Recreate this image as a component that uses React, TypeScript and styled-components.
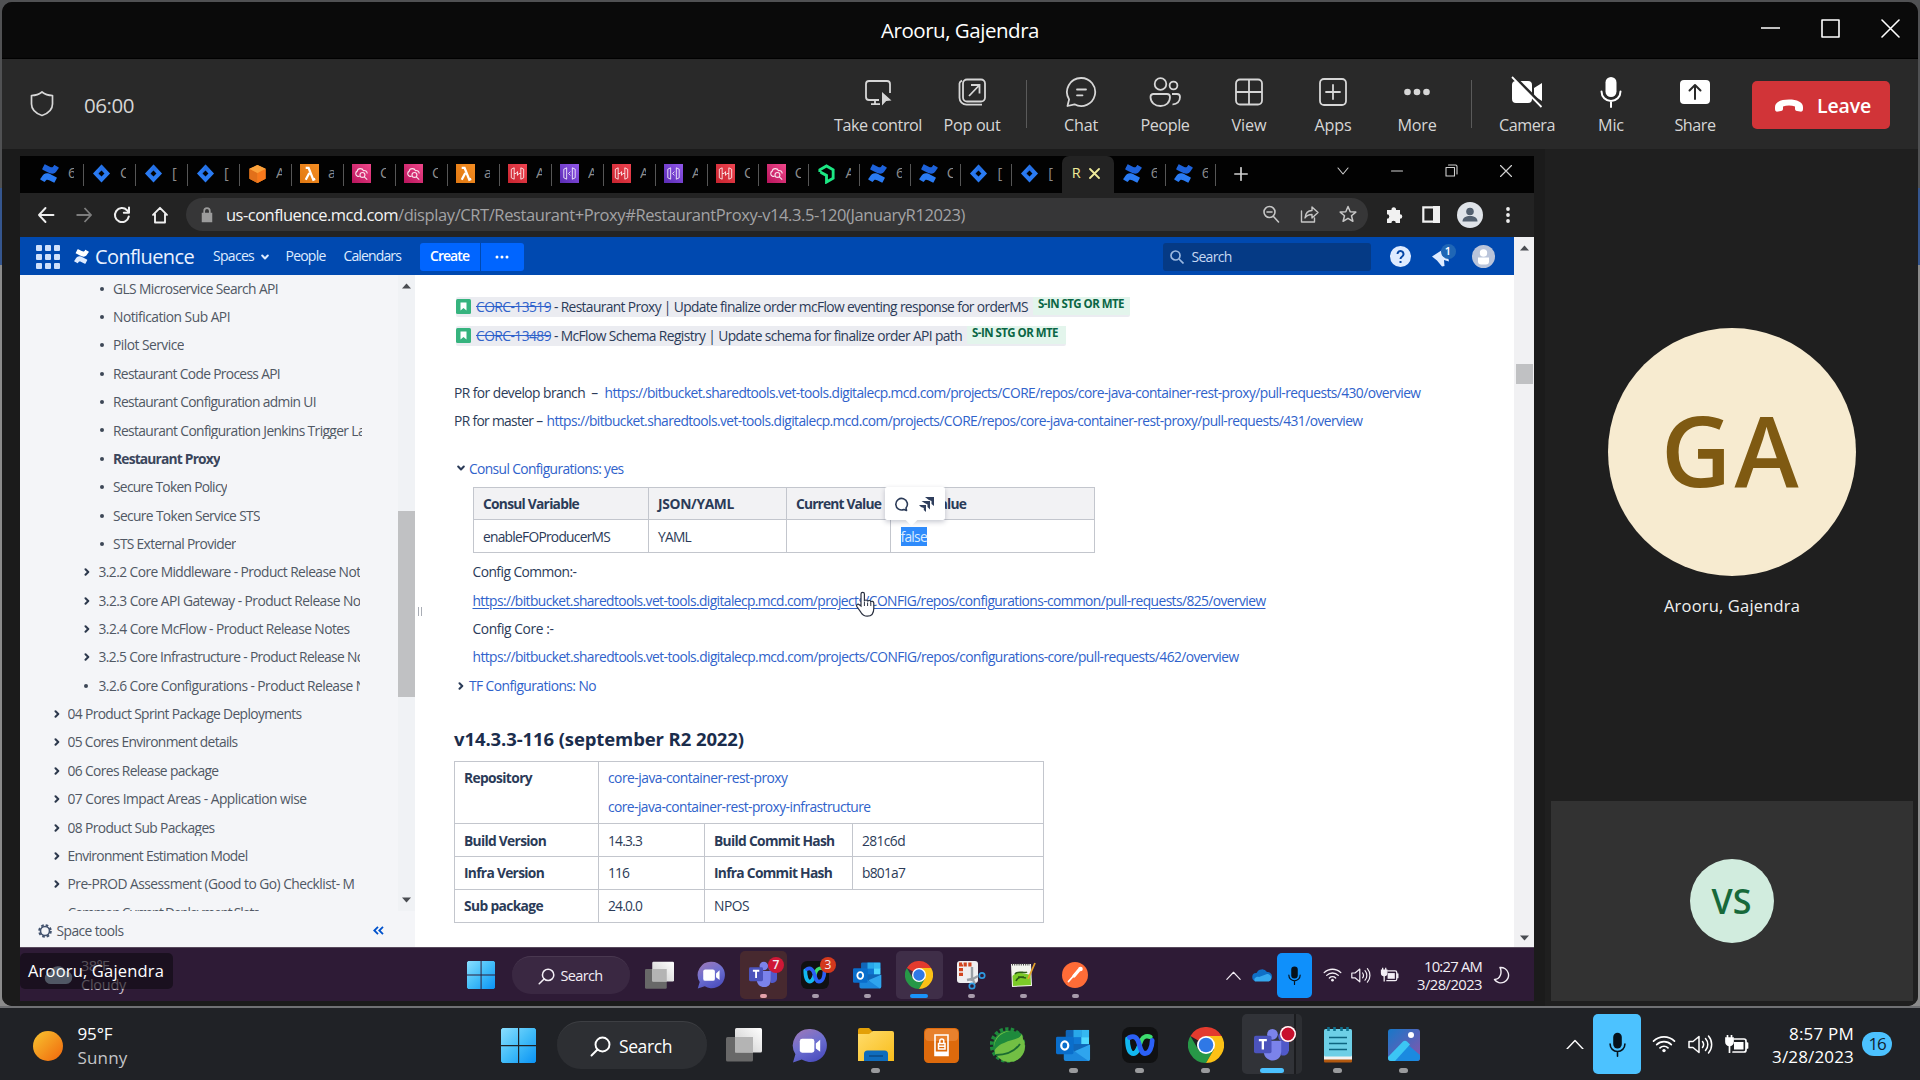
import React, { useLayoutEffect, useRef } from 'react';
import styled, { createGlobalStyle, css } from 'styled-components';

const Global = createGlobalStyle`
  * { box-sizing: border-box; }
  html, body { margin: 0; padding: 0; background: #202226; overflow: hidden; }
  body { font-family: "Open Sans", "Noto Sans", sans-serif; }
  svg { display: block; flex: none; }
`;

/* ---------- text with an exact run width ---------- */
const Run = styled.span<{ $s: number; $c?: string; $b?: number; $u?: string }>`
  display: block;
  flex: none;
  white-space: pre;
  width: max-content;
  line-height: 1.3;
  font-size: ${p => p.$s}px;
  font-weight: ${p => p.$b || 400};
  color: ${p => p.$c || 'inherit'};
  text-decoration: ${p => p.$u || 'none'};
  text-underline-offset: 2px;
`;
type TProps = { w?: number; s: number; c?: string; b?: number; u?: string; children: string };
function T({ w, s, c, b, u, children }: TProps) {
  const ref = useRef<HTMLSpanElement>(null);
  useLayoutEffect(() => {
    const el = ref.current;
    if (!el || !w) return;
    el.style.letterSpacing = '0px';
    const natural = el.getBoundingClientRect().width;
    el.style.letterSpacing = `${(w - natural) / children.length}px`;
  }, [w, s, b, children]);
  return <Run ref={ref} $s={s} $c={c} $b={b} $u={u}>{children}</Run>;
}

/* ---------- shell ---------- */
const Desktop = styled.div`
  width: 1920px; height: 1080px; display: flex; flex-direction: column; overflow: hidden;
  background: linear-gradient(#505153 0 188px, #35568f 188px 265px, #8b8b8b 265px 1008px);
`;
const Win = styled.div`
  margin: 2px 2px 0; height: 1004px; border-radius: 10px; overflow: hidden; background: #1f1f1f;
  display: flex; flex-direction: column; flex: none;
`;
const TitleBar = styled.div`
  height: 57px; flex: none; background: #0a0a0a; border-bottom: 1px solid #000; padding-top: 1px;
  display: grid; grid-template-columns: 1fr auto 1fr; align-items: center; color: #fff;
`;
const WinButtons = styled.div`
  display: flex; justify-content: flex-end; gap: 41px; padding: 0 18px 4px 0; align-items: center;
`;
const MeetingBar = styled.div`
  height: 90px; flex: none; background: #292929; display: flex; align-items: center; color: #d6d6d6;
  padding: 0 28px 0 27px; box-shadow: 0 2px 3px #181818;
`;
const Clock = styled.div`margin-left: 29px; padding-top: 3px; flex: 1;`;
const ToolCell = styled.div<{ $w?: number; $bright?: boolean }>`
  width: ${p => p.$w || 84}px; height: 90px; padding-top: 17px; display: flex; flex-direction: column; align-items: center;
  flex: none; gap: 7px; svg { color: ${p => (p.$bright ? '#fff' : '#d6d6d6')}; }
`;
const Divider = styled.div<{ $l: number; $r: number }>`
  width: 1px; height: 48px; background: #5a5a5a; margin: 0 ${p => p.$r}px 0 ${p => p.$l}px; flex: none;
`;
const Leave = styled.div`
  width: 138px; height: 48px; margin-left: 15px; margin-top: 1px; border-radius: 5px; background: #d13438; color: #fff; flex: none;
  display: flex; align-items: center; padding: 2px 19px 0 22px; justify-content: space-between;
`;
const Body = styled.div`flex: 1; display: flex; min-height: 0;`;
const StageWrap = styled.div`width: 1543px; background: #1b1b1b; padding: 7px 0 5px 18px; flex: none;`;
const Stage = styled.div`
  width: 1514px; height: 845px; display: flex; flex-direction: column; position: relative; overflow: hidden;
`;

/* ---------- browser ---------- */
const TabStrip = styled.div`height: 37px; flex: none; background: #020202; display: flex; padding-left: 11px;`;
const Tab = styled.div<{ $w: number; $bare?: boolean }>`
  width: ${p => p.$w}px; height: 37px; display: flex; align-items: center; gap: 9px; padding: 0 0 2px 9px; flex: none;
  position: relative;
  &::after {
    content: ''; position: absolute; right: -1px; top: 8px; height: 22px; width: 1px;
    background: ${p => (p.$bare ? 'transparent' : '#565656')};
  }
`;
const TabLetter = styled.div`width: 6px; overflow: hidden; color: #8d8d8d;`;
const ActiveTab = styled.div`
  width: 52px; flex: none; background: #232323; border-radius: 7px 7px 0 0; display: flex; align-items: center; gap: 9px; padding: 0 0 2px 10px; color: #efeb9a;
`;
const StripEnd = styled.div`flex: 1; display: flex; align-items: center; color: #d0d0d0; padding: 0 22px 2px 19px;`;
const StripControls = styled.div`margin-left: auto; display: flex; gap: 42px; align-items: center; padding-bottom: 6px;`;
const AddressRow = styled.div`
  height: 44px; flex: none; background: #232323; display: flex; align-items: center; padding: 0 19px 1px 17px; color: #eee;
`;
const NavIcons = styled.div`display: flex; gap: 20px; width: 149px; flex: none;`;
const UrlPill = styled.div`
  width: 1182px; height: 33px; border-radius: 17px; background: #363637; display: flex; align-items: center; padding: 0 11px 0 14px; flex: none;
`;
const UrlText = styled.div`display: flex; margin-left: 12px; flex: 1; padding-top: 1px;`;
const UrlIcons = styled.div`display: flex; gap: 20px; color: #c6c6c6;`;
const BrowserIcons = styled.div`display: flex; align-items: center; margin-left: 17px; flex: 1; justify-content: space-between;`;
const PageRow = styled.div`height: 710px; flex: none; display: flex; background: #fff;`;
const PageCol = styled.div`width: 1494px; flex: none; display: flex; flex-direction: column;`;
const PageScroll = styled.div`
  width: 20px; background: #f1f1f3; display: flex; flex-direction: column; align-items: center; padding: 8px 0 6px;
`;
const ScrollThumb = styled.div<{ $w: number; $h: number; $mt: number }>`
  width: ${p => p.$w}px; height: ${p => p.$h}px; margin-top: ${p => p.$mt}px; background: #c0c1c3; flex: none;
`;
const Spring = styled.div`flex: 1;`;

/* ---------- confluence ---------- */
const ConfHeader = styled.div`
  height: 38px; flex: none; background: #0049b0; display: flex; align-items: center; color: #deebff; padding: 1px 0 0 16px;
`;
const AppGrid = styled.div`
  display: grid; grid-template-columns: repeat(3, 6px); grid-auto-rows: 6px; gap: 3px; i { background: #cfe0fb; border-radius: 1px; }
`;
const Gap = styled.div<{ $w: number }>`width: ${p => p.$w}px; flex: none;`;
const CreateBtn = styled.div<{ $w: number; $first?: boolean }>`
  width: ${p => p.$w}px; height: 28px; background: #0065ff; display: flex; align-items: center; justify-content: center;
  border-radius: ${p => (p.$first ? '3px 0 0 3px' : '0 3px 3px 0')}; margin-right: ${p => (p.$first ? 1 : 0)}px; flex: none;
`;
const SearchBox = styled.div`
  width: 208px; height: 28px; border-radius: 3px; background: #053a85; margin-left: 639px; display: flex; align-items: center; gap: 8px; padding: 1px 0 0 7px; flex: none;
`;
const Bell = styled.div`position: relative; width: 24px; height: 26px; margin-left: 20px;`;
const BellCount = styled.div`
  position: absolute; right: -1px; top: 0; width: 15px; height: 15px; border-radius: 50%; background: #1f66b5; color: #fff; display: flex; align-items: center; justify-content: center;
`;
const ConfBody = styled.div`flex: 1; display: flex; min-height: 0;`;
const Sidebar = styled.div`width: 395px; background: #f4f5f8; display: flex; flex-direction: column; flex: none;`;
const TreeWrap = styled.div`height: 636px; display: flex; flex: none;`;
const Tree = styled.div`width: 378px; overflow: hidden; color: #505864;`;
const TreeRow = styled.div<{ $lv: number }>`
  height: 28.37px; display: flex; align-items: center; padding: 0 0 1px ${p => [29, 59, 75][p.$lv]}px;
`;
const Marker = styled.div<{ $lv: number }>`
  width: ${p => [18.5, 19.5, 18][p.$lv]}px; display: flex; align-items: center; padding-left: 4px; flex: none; color: #2d394d;
`;
const Dot = styled.i`width: 4px; height: 4px; border-radius: 50%; background: #3d4757; margin-left: 1px;`;
const Clip = styled.div<{ $lv: number }>`
  max-width: ${p => (p.$lv === 2 ? 249 : p.$lv === 1 ? 261.5 : 290)}px; overflow: hidden;
`;
const TreeScroll = styled.div`width: 17px; background: #f0f2f5; display: flex; flex-direction: column; align-items: center; padding: 8px 0;`;
const SpaceTools = styled.div`
  flex: 1; display: flex; align-items: center; padding: 3px 31px 0 18px; color: #4f5763; gap: 4.5px;
`;
const Splitter = styled.div`
  width: 8px; display: flex; gap: 2px; padding: 332px 0 0 3px; i { width: 1px; height: 9px; background: #a9adb5; }
`;
const Article = styled.div`
  flex: 1; padding: 17px 0 0 31px; display: flex; flex-direction: column; color: #2b3b58; background: #fff; position: relative;
`;
const Line = styled.div<{ $h?: number; $mt?: number; $ind?: number; $gap?: number }>`
  height: ${p => p.$h || 28.4}px; margin-top: ${p => p.$mt || 0}px; padding-left: ${p => p.$ind || 0}px; gap: ${p => p.$gap || 0}px;
  display: flex; align-items: center; flex: none;
`;
const Issue = styled.div<{ $w: number }>`
  margin-left: 2px; height: 20px; width: ${p => p.$w}px; background: #ebecf1; display: flex; align-items: center; border-radius: 2px;
`;
const Status = styled.div`
  height: 18px; margin: 0 0 2px 5px; flex: 1; padding: 0 0 2px 5px; display: flex; align-items: center; background: #e3f5ec;
`;
const Grid1 = styled.div`
  margin: 4.6px 0 0 19px; width: 622px; display: grid; grid-template-columns: 175px 138px 104px 204px; grid-template-rows: 32px 33px;
  border: solid #c3c6cd; border-width: 1px 0 0 1px; flex: none; position: relative;
`;
const cellBase = css`border: solid #c3c6cd; border-width: 0 1px 1px 0; display: flex; padding: 1px 0 0 9px; align-items: center;`;
const Cell = styled.div<{ $head?: boolean; $span?: number }>`
  ${cellBase}
  background: ${p => (p.$head ? '#f2f2f4' : '#fff')};
  grid-column: span ${p => p.$span || 1};
`;
const TallCell = styled(Cell)`flex-direction: column; align-items: flex-start; padding-top: 2px; & > div { height: 28.4px; }`;
const Grid2 = styled.div`
  margin-top: 6.5px; width: 590px; display: grid; grid-template-columns: 144px 106px 148px 191px; grid-template-rows: 62px 33px 32.5px 33px;
  border: solid #c3c6cd; border-width: 1px 0 0 1px; flex: none;
`;
const Selected = styled.span`background: #2f8bfb; height: 19px; display: flex; align-items: center; margin-left: .5px;`;
const Popup = styled.div`
  position: absolute; left: 411px; top: -1px; width: 60px; height: 33px; background: #fff; border-radius: 2px; box-shadow: 0 2px 5px rgba(30,40,70,.25);
  display: flex; align-items: center; padding: 2px 10px 0 9px; justify-content: space-between;
  &::after { content: ''; position: absolute; left: 22px; top: 28px; width: 9px; height: 9px; background: #fff; transform: rotate(45deg); }
`;
const Hand = styled.div`position: absolute; left: 432px; top: 316px;`;

/* ---------- shared-screen taskbar ---------- */
const InnerBar = styled.div`
  height: 54px; flex: none; background: #2e1b36; border-top: 1px solid #57495c; display: flex; align-items: center; color: #f3eef5; padding: 1px 0 0 24px;
`;
const InnerWeather = styled.div`width: 423px; display: flex; gap: 8px; color: #c4bcc8; flex: none; align-items: center;`;
const Stack = styled.div<{ $h: number; $end?: boolean }>`
  display: flex; flex-direction: column; align-items: ${p => (p.$end ? 'flex-end' : 'flex-start')}; & > * { height: ${p => p.$h}px; line-height: ${p => p.$h}px; }
`;
const Pill = styled.div<{ $w: number; $h: number; $bg: string; $gap: number; $pl: number }>`
  width: ${p => p.$w}px; height: ${p => p.$h}px; border-radius: ${p => p.$h / 2}px; background: ${p => p.$bg}; border-top: 1px solid rgba(255,255,255,.08);
  display: flex; align-items: center; gap: ${p => p.$gap}px; padding: 1px 0 0 ${p => p.$pl}px; flex: none;
`;
const AppSlot = styled.div<{ $w: number; $h: number; $bg?: string; $dot?: string; $dw?: number }>`
  width: ${p => p.$w}px; height: ${p => p.$h}px; display: flex; align-items: center; justify-content: center; position: relative; flex: none;
  &::before { content: ''; position: absolute; inset: 0 ${p => (p.$w > 60 ? 3 : 2.5)}px; border-radius: 5px; background: ${p => p.$bg || 'transparent'}; }
  &::after {
    content: ''; position: absolute; bottom: 1px; height: ${p => (p.$w > 60 ? 5 : 4)}px; width: ${p => p.$dw || 7}px; border-radius: 3px; background: ${p => p.$dot || 'transparent'};
  }
  svg { position: relative; top: ${p => (p.$w > 60 ? 1 : 0)}px; }
`;
const Badge = styled.div<{ $x: number; $y: number; $bg: string; $ring?: boolean }>`
  position: absolute; left: ${p => p.$x}px; top: ${p => p.$y}px; width: 16px; height: 16px; border-radius: 50%; background: ${p => p.$bg};
  display: flex; align-items: center; justify-content: center; box-shadow: ${p => (p.$ring ? 'inset 0 0 0 1.5px #fff' : 'none')};
`;
const MicTile = styled.div<{ $w: number; $h: number; $bg: string }>`
  width: ${p => p.$w}px; height: ${p => p.$h}px; background: ${p => p.$bg}; border-radius: 5px; color: #06121c; display: flex; align-items: center; justify-content: center; flex: none;
`;
const NameTag = styled.div`
  position: absolute; left: 0; top: 797px; width: 153px; height: 36px; border-radius: 5px; background: rgba(14,10,16,.6); display: flex; align-items: center; padding-left: 8px;
`;

/* ---------- participants ---------- */
const People = styled.div`flex: 1; display: flex; flex-direction: column; align-items: center; padding: 179px 4px 5px 5px; background: #1f1f1f;`;
const Avatar = styled.div<{ $d: number; $bg: string }>`
  width: ${p => p.$d}px; height: ${p => p.$d}px; border-radius: 50%; background: ${p => p.$bg}; display: flex; align-items: center; justify-content: center; flex: none;
  padding-bottom: ${p => (p.$d > 100 ? 6 : 0)}px; letter-spacing: 0; margin-right: 1px;
`;
const PersonName = styled.div`margin-top: 19px; height: 26px; flex: none;`;
const SelfTile = styled.div`
  margin-top: auto; width: 362px; height: 200px; background: #323232; display: flex; align-items: center; justify-content: center;
`;

/* ---------- local taskbar ---------- */
const OuterBar = styled.div`
  height: 74px; border-top: 2px solid #707174; background: #202226; display: flex; align-items: center; color: #fff; flex: none; padding: 0 0 0 33px;
`;
const OuterWeather = styled.div`width: 468px; display: flex; align-items: center; gap: 14.5px; flex: none; padding-top: 3px;`;
const Lower = styled.div`padding-top: 2px; flex: none;`;
const Count = styled.div`
  width: 30px; height: 24px; border-radius: 12px; background: #4cc2ff; display: flex; align-items: center; justify-content: center; margin: 0 0 0 8px; padding-top: 1px;
`;

/* ---------- icons ---------- */
type I = { s?: number };
const Ln = ({ s = 24, sw = 1.5, d, vb = 24, fill = 'none', h }: { s?: number; sw?: number; d: string; vb?: number; fill?: string; h?: number }) => (
  <svg width={s} height={h || s} viewBox={`0 0 ${vb} ${h ? (vb * h) / s : vb}`} fill={fill} stroke="currentColor" strokeWidth={sw} strokeLinecap="round" strokeLinejoin="round"><path d={d} /></svg>
);
const Shield = () => <Ln s={26} h={28} vb={26} sw={1.7} d="M13 2 C16 4.500 19 5.500 23.500 5.500 V14 C23.500 20 19 23.500 13 25.500 C7 23.500 2.500 20 2.500 14 V5.500 C7 5.500 10 4.500 13 2Z" />;
const TakeControlI = () => (
  <svg width="32" height="32" viewBox="0 0 32 32" fill="none" stroke="currentColor" strokeWidth="1.8">
    <path d="M17 24H7a3 3 0 0 1-3-3V8a3 3 0 0 1 3-3h18a3 3 0 0 1 3 3v9M13 24v4M9 28.2h9" />
    <path d="M20 16l9.5 8.5-5.3.6L20 29.5z" fill="currentColor" stroke="none" />
  </svg>
);
const PopOutI = () => (
  <svg width="32" height="32" viewBox="0 0 32 32" fill="none" stroke="currentColor" strokeWidth="1.8">
    <rect x="7" y="3.5" width="22" height="22" rx="4" /><path d="M26 28.700H10.500A7 7 0 0 1 3.500 21.700V7.500Q3.500 6 6 4.500M13 20L23 9.500M15 9h8.500V17.500" />
  </svg>
);
const ChatI = () => <Ln s={32} vb={32} sw={1.8} d="M16 2a14 14 0 1 1-6.500 26.300L2.500 30l1.600-6.600A14 14 0 0 1 16 2zM12 13.500h9M12 19.300h5.500" />;
const PeopleI = () => (
  <svg width="34" height="32" viewBox="0 0 34 32" fill="none" stroke="currentColor" strokeWidth="1.8">
    <circle cx="12.500" cy="8" r="5.800" /><circle cx="25.500" cy="9.500" r="3.900" />
    <path d="M5 18h14a3 3 0 0 1 3 3c0 5.500-4 9-9.500 9S2.500 26.500 2.500 21A3 3 0 0 1 5 18zM24 18h5a3 3 0 0 1 3 3c0 4.500-3 7.500-7.500 7.300" />
  </svg>
);
const ViewI = () => <Ln s={32} vb={32} sw={1.8} d="M7 3.500h18a4 4 0 0 1 4 4v17a4 4 0 0 1-4 4H7a4 4 0 0 1-4-4v-17a4 4 0 0 1 4-4zM16 3.500v25M3 16h26" />;
const AppsI = () => <Ln s={32} vb={32} sw={1.8} d="M7 3h18a4 4 0 0 1 4 4v18a4 4 0 0 1-4 4H7a4 4 0 0 1-4-4V7a4 4 0 0 1 4-4zM16 9v14M9 16h14" />;
const MoreI = () => <svg width="32" height="32" viewBox="0 0 32 32" fill="currentColor"><circle cx="6.500" cy="16" r="3.300" /><circle cx="16" cy="16" r="3.300" /><circle cx="25.500" cy="16" r="3.300" /></svg>;
const CameraI = () => (
  <svg width="34" height="32" viewBox="0 0 34 32">
    <path d="M6 5h12a4 4 0 0 1 4 4v14a4 4 0 0 1-4 4H6a4 4 0 0 1-4-4V9a4 4 0 0 1 4-4zM24 12l8-5v18l-8-5z" fill="currentColor" />
    <path d="M4 .5L33.500 30" stroke="#292929" strokeWidth="3" /><path d="M2 1L31.500 31" stroke="currentColor" strokeWidth="1.800" />
  </svg>
);
const MicI = ({ s = 32 }: I) => (
  <svg width={s} height={s} viewBox="0 0 32 32" fill="none" stroke="currentColor" strokeWidth="2" strokeLinecap="round">
    <rect x="10.500" y="1" width="11" height="20" rx="5.500" fill="currentColor" stroke="none" /><path d="M6.500 15.500a9.500 9.500 0 0 0 19 0M16 25v6" />
  </svg>
);
const ShareI = () => (
  <svg width="32" height="32" viewBox="0 0 32 32" fill="none"><rect x="1" y="4" width="30" height="24" rx="4" fill="currentColor" />
    <path d="M16 23V9.500M10.500 14.500L16 9l5.500 5.500" stroke="#292929" strokeWidth="2" strokeLinecap="round" strokeLinejoin="round" /></svg>
);
const PhoneI = () => <svg width="30" height="16" viewBox="0 0 30 16"><path d="M1 9C1 4 7 1.500 15 1.500S29 4 29 9v2c0 2-1.200 3-3 2.600l-3-.6c-1.500-.3-2-1.300-2-2.600V8.500c-3.500-1.500-8.500-1.500-12 0v1.900c0 1.300-.5 2.300-2 2.600l-3 .6C2.200 14 1 13 1 11z" fill="#fff" /></svg>;
const ConfI = ({ s = 19, c = '#2a7bf3', c2 = '#1d62da' }: I & { c?: string; c2?: string }) => (
  <svg width={s} height={s} viewBox="0 0 20 20">
    <path d="M1.200 14.600c3-5.600 6.200-5.600 10.800-3.400l5.200 2.700c.5.200.6.500.4 1l-2.200 4.300c-.2.500-.5.600-1 .4l-4.700-2.400c-2.400-1.100-3-.8-4.400 1.300-.3.400-.6.500-1 .3L.6 16.600c-.5-.3-.5-.6-.2-1z" fill={c} />
    <path d="M18.800 5.400c-3 5.600-6.200 5.600-10.800 3.400L2.800 6.100c-.5-.2-.6-.5-.4-1L4.600.8c.2-.5.500-.6 1-.4l4.700 2.400c2.400 1.100 3 .8 4.400-1.300.3-.4.6-.5 1-.3l3.700 2.200c.5.300.5.600.2 1z" fill={c2} />
  </svg>
);
const JiraI = () => <svg width="19" height="19" viewBox="0 0 20 20"><path d="M10 .5l9 9.500-9 9.500L1 10z" fill="#2a7bf3" /><path d="M10 .5l4.500 4.700-7 7.400L10 15l-4.500-4.600z" fill="#2169dd" opacity=".6" /><path d="M10 6.800l3.100 3.200-3.100 3.200L6.900 10z" fill="#020202" /></svg>;
const CubeI = () => <svg width="19" height="20" viewBox="0 0 20 20"><path d="M10 .5l8.500 4V15L10 19.500 1.500 15V4.500z" fill="#f58a1f" /><path d="M10 9v10.500L1.500 15V4.500z" fill="#e2701a" /><path d="M10 9v10.500l8.500-4.500V4.500z" fill="#f9791c" /><path d="M10 .5l8.500 4L10 9 1.500 4.500z" fill="#fba23c" /></svg>;
const Sq = ({ c, c2, children }: { c: string; c2: string; children: React.ReactNode }) => (
  <svg width="19" height="19" viewBox="0 0 20 20"><defs><linearGradient id={'g' + c.slice(1)} x1="0" y1="1" x2="1" y2="0"><stop offset="0" stopColor={c2} /><stop offset="1" stopColor={c} /></linearGradient></defs>
    <rect width="20" height="20" fill={`url(#g${c.slice(1)})`} /><g fill="none" stroke="#fff" strokeWidth="1.200" strokeOpacity=".85">{children}</g></svg>
);
const LambdaI = () => <Sq c="#f58d22" c2="#e07812"><path d="M6 4h3l5 12.500 2-.8M9.800 9.500L6 16.500" strokeWidth="2.400" strokeOpacity="1" /></Sq>;
const PinkI = () => <Sq c="#f0478a" c2="#b8145c"><path d="M8 13H6a3 3 0 0 1-.5-5.500C6 4 11 4 12 7c2.500-.5 4 1 4 3" /><circle cx="11" cy="11.500" r="2.600" /><path d="M13 13.500l3 3" /></Sq>;
const RedI = () => <Sq c="#ef4350" c2="#c7242f"><path d="M6.500 4v12l-3-1.500v-9zM13.500 4v12l3-1.500v-9zM6.500 10h2l1.500-2v4l1.500-2h2" strokeWidth="1" /></Sq>;
const PurpleI = () => <Sq c="#9157ea" c2="#5a2cb4"><path d="M7 4v12l-3-1.500v-9zM13 4v12l3-1.500v-9zM11 8l-2 2 2 2" strokeWidth="1" /></Sq>;
const RelicI = () => <svg width="19" height="20" viewBox="0 0 20 20"><path d="M3 8V5.500L10 1.500l7 4v9l-7 4v-7L3.500 8M10 11.500L5 9" fill="none" stroke="#1ce783" strokeWidth="3" /></svg>;
const WifiI = ({ s = 24 }: I) => (
  <svg width={s} height={s * 0.8} viewBox="0 0 24 19" fill="none" stroke="currentColor" strokeWidth="1.700" strokeLinecap="round"><path d="M1.500 7a15 15 0 0 1 21 0M4.700 10.500a10.300 10.300 0 0 1 14.600 0M8 13.800a5.700 5.700 0 0 1 8 0" /><circle cx="12" cy="16.500" r="1.700" fill="currentColor" stroke="none" /></svg>
);
const VolI = ({ s = 24 }: I) => <svg width={s} height={s * 0.84} viewBox="0 0 25 21" fill="none" stroke="currentColor" strokeWidth="1.500" strokeLinecap="round" strokeLinejoin="round"><path d="M1 7.500v6h4l6 5V2.500l-6 5zM14.500 7.500a5 5 0 0 1 0 6M17.500 4.500a9 9 0 0 1 0 12M20.500 2a13 13 0 0 1 0 17" /></svg>;
const BattI = ({ s = 24 }: I) => <svg width={s} height={s * 0.84} viewBox="0 0 25 21" fill="none" stroke="currentColor" strokeWidth="1.700"><path d="M10 5h10a2 2 0 0 1 2 2v9a2 2 0 0 1-2 2H9M23.500 9v5" strokeLinecap="round" /><rect x="10" y="8" width="9.500" height="7.500" fill="currentColor" stroke="none" /><path d="M2 4h7v4a3 3 0 0 1-7 0zM3.500 1v4M7.500 1v4" fill="currentColor" /><path d="M5.500 10v9" /></svg>;
const UpI = ({ s = 18 }: I) => <Ln s={s} h={s * 0.6} vb={18} sw={1.4} d="M1 10L9 1.500L17 10" />;
const WinLogo = ({ s }: { s: number }) => (
  <svg width={s} height={s} viewBox="0 0 35 35"><defs><linearGradient id="wl" x1="0" y1="0" x2="1" y2="1"><stop offset="0" stopColor="#8adfff" /><stop offset=".5" stopColor="#43bdf8" /><stop offset="1" stopColor="#0a93f5" /></linearGradient></defs>
    <path d="M1.500 0H17v17H0V1.500zM18.200 0H33.500L35 1.500V17H18.200zM0 18.200h17V35H1.500L0 33.500zM18.200 18.200H35v15.300L33.500 35H18.200z" fill="url(#wl)" /></svg>
);
const LensI = ({ s }: { s: number }) => <svg width={s} height={s} viewBox="0 0 21 21" fill="none" stroke="currentColor" strokeWidth="1.900" strokeLinecap="round"><circle cx="12.500" cy="8.500" r="7" /><path d="M7.500 13.500L1.500 19.500" /></svg>;
const TaskViewI = ({ s }: { s: number }) => (
  <svg width={s} height={s} viewBox="0 0 36 36"><defs><linearGradient id="tv" x1="0" y1="1" x2="1" y2="0"><stop offset="0" stopColor="#c9c9c9" /><stop offset="1" stopColor="#fff" /></linearGradient></defs>
    <rect x="0" y="10" width="27" height="24.500" rx="1.500" fill="#686868" /><rect x="9" y="1" width="27" height="24.500" rx="1.500" fill="url(#tv)" /><rect x="9" y="10" width="18" height="15.500" fill="#b4b4b4" /></svg>
);
const MeetI = ({ s }: { s: number }) => (
  <svg width={s} height={s} viewBox="0 0 36 36"><defs><linearGradient id="mt" x1=".2" y1="0" x2=".7" y2="1"><stop offset="0" stopColor="#9a78ba" /><stop offset=".5" stopColor="#6b6ed0" /><stop offset="1" stopColor="#4a4cbd" /></linearGradient></defs>
    <path d="M19 1a17 17 0 1 1-9 31.500L1 35.500l2.500-8.500A17 17 0 0 1 19 1z" fill="url(#mt)" /><rect x="8" y="11" width="15" height="14.500" rx="2.500" fill="#fff" /><path d="M24.500 16l4.500-4v12.500l-4.500-3.500z" fill="#fff" /></svg>
);
const TeamsI = ({ s }: { s: number }) => (
  <svg width={s} height={s} viewBox="0 0 36 36"><circle cx="29" cy="9" r="4" fill="#5059c9" /><circle cx="19" cy="6.500" r="5.500" fill="#7b83eb" /><path d="M27 13h9v10a6 6 0 0 1-8 5z" fill="#5059c9" />
    <path d="M12 13h16v11c0 6-3.500 9.500-8.500 9.500S10 30 10 24z" fill="#7b83eb" /><rect x="0" y="8" width="18" height="18" rx="1.800" fill="#4b53bc" /><path d="M5 12.500h8.200M9.100 12.500v9.500" stroke="#fff" strokeWidth="2.400" /></svg>
);
const WebexI = ({ s }: { s: number }) => (
  <svg width={s} height={s} viewBox="0 0 36 36" fill="none" strokeLinecap="round"><rect width="36" height="36" rx="8" fill="#101112" />
    <path d="M14 25c3-2 3.500-8 5.500-12 2-4 6-4.500 9-3" stroke="#3ddc6e" strokeWidth="4.400" />
    <path d="M5.500 12c0 8 2 14.500 6 14.500 3.200 0 4.500-4 6-8" stroke="#12b8ef" strokeWidth="4.800" />
    <path d="M7.500 10.500c5-2.500 8 .5 9.500 6s2.500 10 6 10c4.500 0 7-6 7.200-13" stroke="#2b60f6" strokeWidth="4.800" /></svg>
);
const OutlookI = ({ s }: { s: number }) => (
  <svg width={s} height={s} viewBox="0 0 36 36"><rect x="10" y="2" width="24" height="22" rx="1.500" fill="#1066b8" /><rect x="18" y="2" width="8" height="8" fill="#28a8ea" /><rect x="26" y="2" width="8" height="8" fill="#35b8f1" /><rect x="18" y="9.500" width="8" height="7" fill="#0f78d4" /><rect x="26" y="9.500" width="8" height="7" fill="#50d9ff" />
    <path d="M8 17l13 8 14-8v15a2 2 0 0 1-2 2H10a2 2 0 0 1-2-2z" fill="#1b87dc" /><path d="M35 17v15a2 2 0 0 1-1.500 2L19 24z" fill="#2fa5ee" /><rect x="0" y="9" width="18" height="18" rx="1.500" fill="#0a6ecb" /><ellipse cx="9" cy="18" rx="3.600" ry="4.200" fill="none" stroke="#fff" strokeWidth="2.300" /></svg>
);
const ChromeI = ({ s }: { s: number }) => (
  <svg width={s} height={s} viewBox="0 0 36 36"><path d="M18 18L2.400 9A18 18 0 0 1 33.600 9z" fill="#e33b2e" /><path d="M2.400 9l7.800 13.500L18 27v9A18 18 0 0 1 2.400 9z" fill="#279847" /><path d="M10.200 22.500L18 36l7.800-13.500L18 25z" fill="#279847" /><path d="M25.800 22.500L18 36A18 18 0 0 0 33.600 9H18z" fill="#fbc116" /><circle cx="18" cy="18" r="9" fill="#fff" /><circle cx="18" cy="18" r="7.300" fill="#2f78e6" /></svg>
);
const SnipI = () => (
  <svg width="30" height="30" viewBox="0 0 30 30"><rect x="1" y="1" width="21" height="22" rx="3" fill="#efeff0" /><path d="M5 16V4.500h12" fill="none" stroke="#d2451f" strokeWidth="4" strokeDasharray="3.200 1.500" /><path d="M16 7v12.500l6-3.500M16 19l-5 1M16 18l3 6" fill="none" stroke="#9aa0a6" strokeWidth="2.400" /><circle cx="26" cy="15.500" r="2.700" fill="none" stroke="#2e9be0" strokeWidth="1.700" /><circle cx="16" cy="26" r="2.700" fill="none" stroke="#2e9be0" strokeWidth="1.700" /></svg>
);
const NppI = () => (
  <svg width="28" height="28" viewBox="0 0 28 28"><path d="M2 3h20l1 22-20 1z" fill="#f4f5ee" /><path d="M3.500 15c4-5 8-3 18-1l.5 10-18 1z" fill="#7ccb28" /><path d="M6 13c3-4 10 0 12-2M7 20c2-5 6-4 10-3M9 16h6" stroke="#2c5c16" strokeWidth="1.600" fill="none" /><path d="M3 3.500h18" stroke="#444" strokeWidth="2" strokeDasharray="1 1.200" /><path d="M19 18L26 2" stroke="#e3a32d" strokeWidth="1.800" /></svg>
);
const PostmanI = () => <svg width="26" height="26" viewBox="0 0 26 26"><circle cx="13" cy="13" r="13" fill="#ff6c37" /><path d="M6.500 19.500l8-9" stroke="#fff" strokeWidth="1.800" strokeLinecap="round" /><path d="M12 14l5-6" stroke="#fff" strokeWidth="3.400" strokeLinecap="round" /><circle cx="18.500" cy="7" r="2.300" fill="#fff" /></svg>;
const FolderI = () => (
  <svg width="36" height="36" viewBox="0 0 36 36"><path d="M0 3a2 2 0 0 1 2-2h9l4 4v6H0z" fill="#e3a008" /><defs><linearGradient id="fo" x1="0" y1="0" x2="1" y2="1"><stop offset="0" stopColor="#ffdc6b" /><stop offset="1" stopColor="#f9bd1b" /></linearGradient></defs><path d="M0 7h11l4-3h19a2 2 0 0 1 2 2v28H0z" fill="url(#fo)" /><path d="M6 34v-7a3.500 3.500 0 0 1 3.500-3.500h17A3.500 3.500 0 0 1 30 27v7z" fill="#0f6cbd" /><path d="M11 29h14" stroke="#0b4a86" strokeWidth="1.500" /></svg>
);
const LockAppI = () => (
  <svg width="35" height="35" viewBox="0 0 35 35"><rect width="35" height="35" rx="4.500" fill="#dd6a0c" /><rect x="1" y="1" width="33" height="12" rx="4" fill="#ec8b3c" opacity=".7" /><path d="M11 7h13v20.500H11z" fill="none" stroke="#fff" strokeWidth="1.600" /><path d="M11 23.500h13v4H11z" fill="#fff" /><path d="M14.500 15.500h6.500v5.500h-6.500zM15.800 15.500v-2.500a2 2 0 0 1 4 0v2.500" fill="none" stroke="#fff" strokeWidth="1.500" /><path d="M14 18.200h7" stroke="#fff" strokeWidth="1.500" /></svg>
);
const SpringI = () => (
  <svg width="36" height="36" viewBox="0 0 36 36"><circle cx="17.500" cy="18" r="15.500" fill="none" stroke="#1e8a3c" strokeWidth="4.500" strokeDasharray="3.200 2.210" /><circle cx="18" cy="18.500" r="15" fill="#1e8a3c" /><circle cx="19.500" cy="19.500" r="15.500" fill="#72bf44" /><path d="M4 25C3 15 8 6 20 4c5 0 9 1 12 3l-2 3c-5 3-10 3-16 6-6 2-9 6-10 9z" fill="#1e8a3c" /><path d="M5 27c1-6 5-8.500 11-10.500S28 14 32 7c2 8 1 16-6 21-6 3.500-15 3-21-1z" fill="#72bf44" /><path d="M6 28c10 0 19-4 24-11" stroke="#1b6b31" strokeWidth="1.900" fill="none" /></svg>
);
const NotepadI = () => (
  <svg width="30" height="36" viewBox="0 0 30 36"><rect x="1" y="29" width="28" height="6.500" rx="1" fill="#b3590f" /><rect x="1" y="28" width="28" height="4.500" fill="#f2f2f2" /><rect x="1" y="2" width="28" height="27.500" rx="1.500" fill="#6dcfe6" /><path d="M6 10.500h18M6 16.500h18M6 22.500h18" stroke="#0d6480" strokeWidth="1.700" /><path d="M5.500 0v4M11.500 0v4M18.500 0v4M24.500 0v4" stroke="#10728f" strokeWidth="2.600" /></svg>
);
const PhotosI = () => (
  <svg width="32" height="32" viewBox="0 0 32 32"><defs><linearGradient id="ph" x1="0" y1="0" x2="1" y2="1"><stop offset="0" stopColor="#1778c9" /><stop offset=".6" stopColor="#5a62b8" /><stop offset="1" stopColor="#8a54a8" /></linearGradient></defs><rect width="32" height="32" rx="3" fill="url(#ph)" /><path d="M5 32L19 15l13 11v3a3 3 0 0 1-3 3z" fill="#1b8ae0" /><path d="M0 28L15 12.500q2-1.500 4 0l3 3L7 32H3a3 3 0 0 1-3-3z" fill="#3cc6f4" /><circle cx="23" cy="6" r="3" fill="#fff" /></svg>
);
const ChevR = ({ down }: { down?: boolean }) => <Ln s={8} vb={8} sw={2} d={down ? 'M1.200 2.500L4 5.500L6.800 2.500' : 'M2.500 1.200L5.300 4L2.500 6.800'} />;
const TriI = ({ up }: { up?: boolean }) => <svg width="9" height="6" viewBox="0 0 9 6"><path d={up ? 'M4.500 .5L9 5.500H0z' : 'M4.500 5.500L9 .5H0z'} fill="#4a4d52" /></svg>;
const StoryI = () => <svg width="15" height="15" viewBox="0 0 15 15"><rect width="15" height="15" rx="1.500" fill="#36b37e" /><path d="M4.500 3.500h6v8L7.500 9l-3 2.500z" fill="#fff" /></svg>;

/* ---------- data ---------- */
const tabs: [React.ComponentType, string][] = [
  [ConfI, '6'], [JiraI, 'C'], [JiraI, '['], [JiraI, '['], [CubeI, 'A'], [LambdaI, 'a'], [PinkI, 'C'], [PinkI, 'C'], [LambdaI, 'a'], [RedI, 'A'],
  [PurpleI, 'A'], [RedI, 'A'], [PurpleI, 'A'], [RedI, 'C'], [PinkI, 'C'], [RelicI, 'A'], [ConfI, '6'], [ConfI, 'C'], [JiraI, '['], [JiraI, '['],
];
const tree: [number, string, number, boolean?][] = [
  [2, 'GLS Microservice Search API', 165], [2, 'Notification Sub API', 117], [2, 'Pilot Service', 71], [2, 'Restaurant Code Process API', 167],
  [2, 'Restaurant Configuration admin UI', 203], [2, 'Restaurant Configuration Jenkins Trigger La', 252], [2, 'Restaurant Proxy', 107], [2, 'Secure Token Policy', 114],
  [2, 'Secure Token Service STS', 147], [2, 'STS External Provider', 123], [1, '3.2.2 Core Middleware - Product Release Not', 262, true],
  [1, '3.2.3 Core API Gateway - Product Release No', 262, true], [1, '3.2.4 Core McFlow - Product Release Notes', 251, true],
  [1, '3.2.5 Core Infrastructure - Product Release No', 266, true], [1, '3.2.6 Core Configurations - Product Release N', 267],
  [0, '04 Product Sprint Package Deployments', 234, true], [0, '05 Cores Environment details', 170, true], [0, '06 Cores Release package', 151, true],
  [0, '07 Cores Impact Areas - Application wise', 239, true], [0, '08 Product Sub Packages', 147, true], [0, 'Environment Estimation Model', 180, true],
  [0, 'Pre-PROD Assessment (Good to Go) Checklist- M', 287, true], [0, 'Common Current Deployment Slots', 191],
];
const LINK = '#2f62cb';
const host = 'https://bitbucket.sharedtools.vet-tools.digitalecp.mcd.com/projects/';

function Browser() {
  return (
    <>
      <TabStrip>
        {tabs.map(([Icon, l], i) => (
          <Tab key={i} $w={i < 13 ? 52 : 50.7} $bare={i === 19}><Icon /><TabLetter><T s={14.500}>{l}</T></TabLetter></Tab>
        ))}
        <ActiveTab>
          <T s={14.500} w={8}>R</T>
          <Ln s={11} vb={11} sw={1.8} d="M1 1L10 10M10 1L1 10" />
        </ActiveTab>
        <Tab $w={51}><ConfI /><TabLetter><T s={14.500}>6</T></TabLetter></Tab>
        <Tab $w={50}><ConfI /><TabLetter><T s={14.500}>6</T></TabLetter></Tab>
        <StripEnd>
          <Ln s={14} vb={14} sw={1.7} d="M7 .8V13.200M.8 7H13.200" />
          <StripControls>
            <Ln s={12} vb={12} sw={1.1} d="M1 3L6 9L11 3" />
            <Ln s={12} vb={12} sw={1.1} d="M.5 6H11.500" />
            <Ln s={13} vb={13} sw={1.1} d="M1 3.500h8.500v8.500H1zM3.500 1h7q1.500 0 1.500 1.500v7.500" />
            <Ln s={12} vb={12} sw={1.2} d="M.5 .5L11.500 11.500M11.500 .5L.5 11.500" />
          </StripControls>
        </StripEnd>
      </TabStrip>
      <AddressRow>
        <NavIcons>
          <Ln s={18} vb={18} sw={1.9} d="M16.500 9H2M8.500 2L2 9l6.500 7" />
          <svg width="18" height="18" viewBox="0 0 18 18" fill="none" stroke="#7d7d7d" strokeWidth="1.800"><path d="M1.500 9H16M9.500 2L16 9l-6.500 7" /></svg>
          <Ln s={18} vb={18} sw={2} d="M15.800 10.500A7 7 0 1 1 14 4.200L16 6.500M16 1.500V6.800H10.800" />
          <Ln s={18} vb={18} sw={1.9} d="M2 8.800L9 1.800L16 8.800M4 8v8.500h10V8" />
        </NavIcons>
        <UrlPill>
          <svg width="14" height="16" viewBox="0 0 14 16"><path d="M2.500 6.500h9v8h-9z" fill="#9c9c9c" stroke="#9c9c9c" strokeWidth="1.500" /><path d="M4.200 6V4a2.800 2.800 0 0 1 5.600 0v2" fill="none" stroke="#9c9c9c" strokeWidth="1.700" /></svg>
          <UrlText>
            <T s={16.500} w={172} c="#f4f4f4">us-confluence.mcd.com</T>
            <T s={16.500} w={567} c="#a3a3a5">/display/CRT/Restaurant+Proxy#RestaurantProxy-v14.3.5-120(JanuaryR12023)</T>
          </UrlText>
          <UrlIcons>
            <Ln s={18} vb={18} sw={1.6} d="M7.500 1.500a5.500 5.500 0 1 1 0 11a5.500 5.500 0 0 1 0-11zM11.500 11.500L16.500 17M5 7h5" />
            <Ln s={19} vb={19} sw={1.4} d="M1.500 6v11h13v-4M5 13c.5-5 3.500-7.500 7-7.500V2l6 5.500-6 5.500V9.500c-3 0-5.500 1-7 3.500z" />
            <Ln s={18} vb={18} sw={1.5} d="M9 1.500l2.200 5.200 5.600.4-4.300 3.700 1.400 5.500L9 13.300l-4.900 3 1.400-5.500L1.200 7.100l5.600-.4z" />
          </UrlIcons>
        </UrlPill>
        <BrowserIcons>
          <svg width="19" height="19" viewBox="0 0 19 19"><path d="M2 5h4.500a2.300 2.300 0 1 1 4.500 0H15v4.200a2.300 2.300 0 1 1 0 4.600V18h-4.200a2.200 2.200 0 0 0-4.400 0H2v-4.200a2.300 2.300 0 0 0 0-4.600z" fill="#f1f1f1" /></svg>
          <svg width="18" height="17" viewBox="0 0 18 17"><path d="M1.300 1.300h15.400v14.400H1.300z" fill="none" stroke="#f1f1f1" strokeWidth="2.200" /><path d="M11 0h7v17h-7z" fill="#f1f1f1" /></svg>
          <svg width="26" height="26" viewBox="0 0 26 26"><circle cx="13" cy="13" r="13" fill="#dfe3e8" /><circle cx="13" cy="9.500" r="3.800" fill="#53606f" /><path d="M5.500 19.500c0-4 3.500-5.500 7.500-5.500s7.500 1.500 7.500 5.500z" fill="#53606f" /></svg>
          <svg width="14" height="18" viewBox="0 0 14 18" fill="#eee"><circle cx="7" cy="3" r="1.900" /><circle cx="7" cy="9" r="1.900" /><circle cx="7" cy="15" r="1.900" /></svg>
        </BrowserIcons>
      </AddressRow>
    </>
  );
}

function ConfluenceHeader() {
  return (
    <ConfHeader>
      <AppGrid>{Array.from({ length: 9 }, (_, i) => <i key={i} />)}</AppGrid>
      <Gap $w={14} /><ConfI s={15} c="#deebff" c2="#fff" /><Gap $w={6} />
      <T s={20} w={99} c="#eaf2ff">Confluence</T><Gap $w={19} />
      <T s={14} w={41}>Spaces</T><Gap $w={7} /><ChevR down /><Gap $w={16.500} />
      <T s={14} w={40}>People</T><Gap $w={18} />
      <T s={14} w={57.500}>Calendars</T><Gap $w={18.500} />
      <CreateBtn $w={60} $first><T s={14} w={39} b={600} c="#fff">Create</T></CreateBtn>
      <CreateBtn $w={43}><svg width="14" height="4" viewBox="0 0 14 4" fill="#fff"><circle cx="2" cy="2" r="1.500" /><circle cx="7" cy="2" r="1.500" /><circle cx="12" cy="2" r="1.500" /></svg></CreateBtn>
      <SearchBox>
        <svg width="14" height="14" viewBox="0 0 14 14" fill="none" stroke="#9bb8e0" strokeWidth="1.700"><circle cx="5.500" cy="5.500" r="4.500" /><path d="M9 9l4.500 4.500" /></svg>
        <T s={14} w={40} c="#c6d8f2">Search</T>
      </SearchBox>
      <Gap $w={19} />
      <svg width="21" height="21" viewBox="0 0 21 21"><circle cx="10.500" cy="10.500" r="10.500" fill="#deebff" /><path d="M7.500 8a3 3 0 1 1 4.700 2.500c-1.200.8-1.700 1.300-1.700 2.500M10.500 15v2" fill="none" stroke="#0747a6" strokeWidth="2" /></svg>
      <Bell>
        <svg width="22" height="24" viewBox="0 0 22 24"><path d="M1 12.500L15 3.500l3 14-5-1.500.5 6-2.500.5L6 16.500z" fill="#deebff" /></svg>
        <BellCount><T s={11} b={600}>1</T></BellCount>
      </Bell>
      <Gap $w={17} />
      <svg width="23" height="23" viewBox="0 0 23 23"><circle cx="11.500" cy="11.500" r="11.500" fill="#b9c4da" /><circle cx="11.500" cy="8" r="3.700" fill="#fff" /><path d="M6 12.500h11v4a3 3 0 0 1-3 3H9a3 3 0 0 1-3-3z" fill="#fff" /></svg>
    </ConfHeader>
  );
}

function SpaceSidebar() {
  return (
    <Sidebar>
      <TreeWrap>
        <Tree>
          {tree.map(([lv, label, w, open], i) => (
            <TreeRow key={label} $lv={lv}>
              <Marker $lv={lv}>{open ? <ChevR /> : i < 22 ? <Dot /> : null}</Marker>
              <Clip $lv={lv}><T s={13.800} w={w} b={label === 'Restaurant Proxy' ? 700 : 400} c={label === 'Restaurant Proxy' ? '#3b465c' : undefined}>{label}</T></Clip>
            </TreeRow>
          ))}
        </Tree>
        <TreeScroll><TriI up /><ScrollThumb $w={17} $h={186} $mt={222} /><Spring /><TriI /></TreeScroll>
      </TreeWrap>
      <SpaceTools>
        <svg width="14" height="14" viewBox="0 0 14 14" fill="none" stroke="#42526e"><circle cx="7" cy="7" r="5.800" strokeWidth="2" strokeDasharray="2.600 1.955" /><circle cx="7" cy="7" r="4.500" strokeWidth="1.600" /></svg>
        <T s={13.800} w={67}>Space tools</T><Spring />
        <svg width="11" height="9" viewBox="0 0 11 9" fill="none" stroke="#0052cc" strokeWidth="1.800"><path d="M5 .8L1.300 4.500L5 8.200M10 .8L6.300 4.500L10 8.200" /></svg>
      </SpaceTools>
    </Sidebar>
  );
}

function Issues({ id, text, w, total }: { id: string; text: string; w: number; total: number }) {
  return (
    <Line $h={29.300}>
      <Issue $w={total}>
        <StoryI /><Gap $w={5} /><T s={13.800} w={75} c={LINK} u="line-through">{id}</T>
        <T s={13.800} w={w}>{text}</T>
        <Status><T s={11.500} b={700} w={86} c="#0a6644">S-IN STG OR MTE</T></Status>
      </Issue>
    </Line>
  );
}

function Page() {
  const S = 13.800;
  return (
    <Article>
      <Issues id="CORC-13519" text=" - Restaurant Proxy | Update finalize order mcFlow eventing response for orderMS" w={477} total={674} />
      <Issues id="CORC-13489" text=" - McFlow Schema Registry | Update schema for finalize order API path" w={411} total={610} />
      <Line $mt={28} $gap={7}><T s={S} w={143.500}>PR for develop branch  –</T><T s={S} w={816} c={LINK}>{host + 'CORE/repos/core-java-container-rest-proxy/pull-requests/430/overview'}</T></Line>
      <Line $gap={4}><T s={S} w={88.500}>PR for master –</T><T s={S} w={816} c={LINK}>{host + 'CORE/repos/core-java-container-rest-proxy/pull-requests/431/overview'}</T></Line>
      <Line $mt={18.900} $ind={3} $gap={4}><ChevR down /><T s={S} w={154.500} c={LINK}>Consul Configurations: yes</T></Line>
      <Grid1>
        <Cell $head><T s={S} b={700} w={96}>Consul Variable</T></Cell>
        <Cell $head><T s={S} b={700} w={76}>JSON/YAML</T></Cell>
        <Cell $head><T s={S} b={700} w={85}>Current Value</T></Cell>
        <Cell $head><T s={S} b={700} w={66}>New Value</T></Cell>
        <Cell><T s={S} w={127}>enableFOProducerMS</T></Cell>
        <Cell><T s={S} w={33}>YAML</T></Cell>
        <Cell />
        <Cell><Selected><T s={S} w={26.500} c="#d9ecff">false</T></Selected></Cell>
        <Popup>
          <Ln s={15} vb={15} sw={1.6} d="M12.500 13.500L10 12.500A5.800 5.800 0 1 1 12 11z" />
          <svg width="17" height="17" viewBox="0 0 17 17" fill="#2f3e5c"><path d="M7 1h9v9l-2.500-2V5l-3-1.200zM3.500 5h8.500v8.500L9.500 11V8.500L6.500 7zM1 9h7v7l-2.200-2v-2L3 11z" /></svg>
        </Popup>
      </Grid1>
      <Line $mt={4.800} $ind={18.500}><T s={S} w={104}>Config Common:-</T></Line>
      <Line $ind={18.500}><T s={S} w={793} c={LINK} u="underline">{host + 'CONFIG/repos/configurations-common/pull-requests/825/overview'}</T></Line>
      <Line $ind={18.500}><T s={S} w={81}>Config Core :-</T></Line>
      <Line $ind={18.500}><T s={S} w={766} c={LINK}>{host + 'CONFIG/repos/configurations-core/pull-requests/462/overview'}</T></Line>
      <Line $ind={3} $gap={4}><ChevR /><T s={S} w={127} c={LINK}>TF Configurations: No</T></Line>
      <Line $h={30} $mt={24.500}><T s={18.500} b={700} w={290} c="#1b2d4c">v14.3.3-116 (september R2 2022)</T></Line>
      <Grid2>
        <TallCell><Line><T s={S} b={700} w={68}>Repository</T></Line></TallCell>
        <TallCell $span={3}>
          <Line><T s={S} w={179.500} c={LINK}>core-java-container-rest-proxy</T></Line>
          <Line><T s={S} w={262.500} c={LINK}>core-java-container-rest-proxy-infrastructure</T></Line>
        </TallCell>
        <Cell><T s={S} b={700} w={82}>Build Version</T></Cell><Cell><T s={S} w={34}>14.3.3</T></Cell><Cell><T s={S} b={700} w={120.500}>Build Commit Hash</T></Cell><Cell><T s={S} w={43}>281c6d</T></Cell>
        <Cell><T s={S} b={700} w={80}>Infra Version</T></Cell><Cell><T s={S} w={21}>116</T></Cell><Cell><T s={S} b={700} w={118}>Infra Commit Hash</T></Cell><Cell><T s={S} w={43}>b801a7</T></Cell>
        <Cell><T s={S} b={700} w={79}>Sub package</T></Cell><Cell><T s={S} w={34}>24.0.0</T></Cell><Cell $span={2}><T s={S} w={35}>NPOS</T></Cell>
      </Grid2>
      <Hand>
        <svg width="22" height="27" viewBox="0 0 22 27"><path d="M6 15V3a1.700 1.700 0 0 1 3.400 0v7.500c0-2 3-2 3.200 0 .5-1.500 3-1.300 3.200.5.700-1.200 3-.8 3 1.200v5c0 5-2.500 8-6.500 8-3.500 0-5-1.500-6.500-4L1.800 15.500c-.8-1.700 1-3 2.500-1.700z" fill="#fff" stroke="#2a3040" strokeWidth="1.200" /><path d="M9.400 11v4M12.600 11.500v3.500M15.800 12v3" stroke="#2a3040" strokeWidth="1" /></svg>
      </Hand>
    </Article>
  );
}

function SharedTaskbar() {
  const d = '#a79bab';
  return (
    <InnerBar>
      <InnerWeather>
        <svg width="29" height="20" viewBox="0 0 29 20"><path d="M7 19a6 6 0 0 1-.5-12A8 8 0 0 1 21.500 6 6.500 6.500 0 0 1 22 19z" fill="#b5cbe2" /></svg>
        <Stack $h={19}><T s={14.500} w={28}>38°F</T><T s={14.500} w={45}>Cloudy</T></Stack>
      </InnerWeather>
      <WinLogo s={28} /><Gap $w={16.500} />
      <Pill $w={118} $h={38} $bg="#3a2842" $gap={6} $pl={26}><LensI s={17} /><T s={14.500} w={42}>Search</T></Pill>
      <Gap $w={3.500} />
      <AppSlot $w={52} $h={48}><TaskViewI s={29} /></AppSlot>
      <AppSlot $w={52} $h={48}><MeetI s={28} /></AppSlot>
      <AppSlot $w={52} $h={48} $bg="#47292f" $dot="#e3a1a8"><TeamsI s={28} /><Badge $x={31} $y={6} $bg="#cf1836"><T s={12} b={600}>7</T></Badge></AppSlot>
      <AppSlot $w={52} $h={48} $dot={d}><WebexI s={28} /><Badge $x={31} $y={6} $bg="#d3391d"><T s={12}>3</T></Badge></AppSlot>
      <AppSlot $w={52} $h={48} $dot={d}><OutlookI s={29} /></AppSlot>
      <AppSlot $w={52} $h={48} $dot="#1a93fa" $dw={18} $bg="#3f2e48"><ChromeI s={28} /></AppSlot>
      <AppSlot $w={52} $h={48} $dot={d}><SnipI /></AppSlot>
      <AppSlot $w={52} $h={48} $dot={d}><NppI /></AppSlot>
      <AppSlot $w={52} $h={48} $dot={d}><PostmanI /></AppSlot>
      <Gap $w={125} /><UpI s={15} /><Gap $w={11} />
      <svg width="20" height="14" viewBox="0 0 20 14"><path d="M4 13a4 4 0 0 1 .5-8A6 6 0 0 1 15 4a4.500 4.500 0 0 1 1 9z" fill="#0f6fc6" /><path d="M3 13.500C1 11 4 8 7 9l8-3c3 0 5 2.500 4 5.500-.5 1.500-2 2-3 2z" fill="#35a8ee" /></svg>
      <Gap $w={5} /><MicTile $w={35} $h={45} $bg="#0f90fb"><MicI s={19} /></MicTile>
      <Gap $w={11} /><WifiI s={19} /><Gap $w={9} /><VolI s={20} /><Gap $w={9} /><BattI s={19} />
      <Gap $w={18} />
      <Stack $h={18.500} $end><T s={14.800} w={58}>10:27 AM</T><T s={14.800} w={65}>3/28/2023</T></Stack>
      <Gap $w={11} /><Ln s={18} vb={18} sw={1.400} d="M7 1.500a7.700 7.700 0 1 1-5.500 12C7 13.500 9.500 7 7 1.500z" />
    </InnerBar>
  );
}

function LocalTaskbar() {
  const d = '#9a9b9d';
  return (
    <OuterBar>
      <OuterWeather>
        <svg width="30" height="30" viewBox="0 0 30 30"><defs><linearGradient id="sun" x1="0" y1="0" x2="1" y2="1"><stop offset="0" stopColor="#f8c530" /><stop offset="1" stopColor="#f0660c" /></linearGradient></defs><circle cx="15" cy="15" r="15" fill="url(#sun)" /></svg>
        <Stack $h={24}><T s={17} w={35}>95°F</T><T s={17} w={50} c="#c4c5c7">Sunny</T></Stack>
      </OuterWeather>
      <Lower><WinLogo s={35} /></Lower><Gap $w={21} />
      <Lower><Pill $w={150} $h={48} $bg="#2d2f33" $gap={8} $pl={33}><LensI s={21} /><T s={17.500} w={53}>Search</T></Pill></Lower>
      <Gap $w={3.500} />
      <AppSlot $w={66} $h={60}><TaskViewI s={36} /></AppSlot>
      <AppSlot $w={66} $h={60}><MeetI s={35} /></AppSlot>
      <AppSlot $w={66} $h={60} $dot={d} $dw={9}><FolderI /></AppSlot>
      <AppSlot $w={66} $h={60}><LockAppI /></AppSlot>
      <AppSlot $w={66} $h={60}><SpringI /></AppSlot>
      <AppSlot $w={66} $h={60} $dot={d} $dw={9}><OutlookI s={35} /></AppSlot>
      <AppSlot $w={66} $h={60} $dot={d} $dw={9}><WebexI s={36} /></AppSlot>
      <AppSlot $w={66} $h={60} $dot={d} $dw={9}><ChromeI s={36} /></AppSlot>
      <AppSlot $w={66} $h={60} $dot="#4cc2ff" $dw={24} $bg="linear-gradient(90deg,#313338 0 52px,#1b1c1f 52px 54px,#2c2e32 54px)">
        <TeamsI s={35} />
        <Badge $x={41} $y={12} $bg="#c8102e" $ring />
      </AppSlot>
      <AppSlot $w={66} $h={60} $dot={d} $dw={9}><NotepadI /></AppSlot>
      <AppSlot $w={66} $h={60} $dot={d} $dw={9}><PhotosI /></AppSlot>
      <Gap $w={129.500} /><UpI s={18} /><Gap $w={9} />
      <MicTile $w={48} $h={60} $bg="#4cc2ff"><MicI s={25} /></MicTile>
      <Gap $w={11} /><WifiI s={24} /><Gap $w={12} /><VolI s={25} /><Gap $w={11} /><BattI s={25} /><Gap $w={23} />
      <Lower><Stack $h={23} $end><T s={17} w={65}>8:57 PM</T><T s={17} w={82}>3/28/2023</T></Stack></Lower>
      <Count><T s={17} w={17} c="#10222e">16</T></Count>
    </OuterBar>
  );
}

const Tool = ({ icon, label, w, cw, bright }: { icon: React.ReactNode; label: string; w: number; cw?: number; bright?: boolean }) => (
  <ToolCell $w={cw} $bright={bright}>{icon}<T s={16.200} w={w}>{label}</T></ToolCell>
);

export default function App() {
  return (
    <Desktop>
      <Global />
      <Win>
        <TitleBar>
          <div />
          <T s={20.500} w={158}>Arooru, Gajendra</T>
          <WinButtons>
            <Ln s={19} vb={19} sw={1.6} d="M.5 9H18.500" />
            <Ln s={19} vb={19} sw={1.6} d="M1 1H18V18H1Z" />
            <Ln s={19} vb={19} sw={1.6} d="M1 1L18 18M18 1L1 18" />
          </WinButtons>
        </TitleBar>
        <MeetingBar>
          <Shield />
          <Clock><T s={20.500} w={50}>06:00</T></Clock>
          <Tool icon={<TakeControlI />} label="Take control" w={88} cw={104} />
          <Tool icon={<PopOutI />} label="Pop out" w={57} />
          <Divider $l={12} $r={12} />
          <Tool icon={<ChatI />} label="Chat" w={34} />
          <Tool icon={<PeopleI />} label="People" w={49} />
          <Tool icon={<ViewI />} label="View" w={35} />
          <Tool icon={<AppsI />} label="Apps" w={37} />
          <Tool icon={<MoreI />} label="More" w={39} />
          <Divider $l={12} $r={13} />
          <Tool icon={<CameraI />} label="Camera" w={56} bright />
          <Tool icon={<MicI />} label="Mic" w={26} bright />
          <Tool icon={<ShareI />} label="Share" w={41} bright />
          <Leave><PhoneI /><T s={19.500} b={600} w={54}>Leave</T></Leave>
        </MeetingBar>
        <Body>
          <StageWrap>
            <Stage>
              <Browser />
              <PageRow>
                <PageCol>
                  <ConfluenceHeader />
                  <ConfBody><SpaceSidebar /><Splitter><i /><i /></Splitter><Page /></ConfBody>
                </PageCol>
                <PageScroll><TriI up /><ScrollThumb $w={17} $h={20} $mt={113} /><Spring /><TriI /></PageScroll>
              </PageRow>
              <SharedTaskbar />
              <NameTag><T s={16.500} w={136} c="#fff">Arooru, Gajendra</T></NameTag>
            </Stage>
          </StageWrap>
          <People>
            <Avatar $d={248} $bg="#f7ebd0"><T s={97} b={600} w={141} c="#7f5a12">GA</T></Avatar>
            <PersonName><T s={16.500} w={136} c="#f0f0f0">Arooru, Gajendra</T></PersonName>
            <SelfTile><Avatar $d={84} $bg="#d1ecde"><T s={34} b={600} w={40} c="#17693a">VS</T></Avatar></SelfTile>
          </People>
        </Body>
      </Win>
      <LocalTaskbar />
    </Desktop>
  );
}
